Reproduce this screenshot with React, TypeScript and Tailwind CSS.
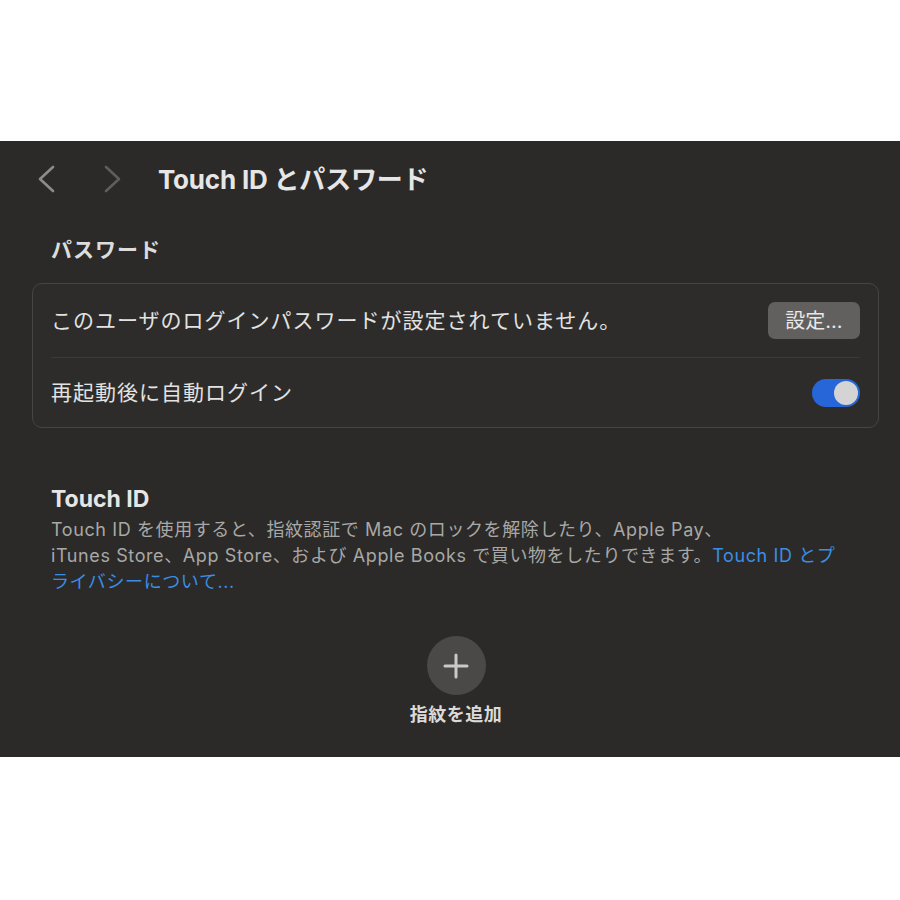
import React from "react";

const font = { fontFamily: '"Inter", "Noto Sans CJK JP", sans-serif' };

export default function App() {
  return (
    <div className="w-[900px] h-[900px] bg-white flex flex-col" style={font}>
      <div className="h-[141px]" />
      <div className="h-[616px] bg-[#2b2a28] flex flex-col">
        {/* toolbar */}
        <div className="flex items-center h-[76px] pl-[37px]">
          <svg width="18" height="28" viewBox="0 0 18 28">
            <path d="M16 2 L3 14 L16 26" stroke="#8c8c8a" strokeWidth="2.6" fill="none" strokeLinecap="round" strokeLinejoin="round" />
          </svg>
          <svg width="18" height="28" viewBox="0 0 18 28" className="ml-[49px]">
            <path d="M2 2 L15 14 L2 26" stroke="#5e5e5c" strokeWidth="2.6" fill="none" strokeLinecap="round" strokeLinejoin="round" />
          </svg>
          <div className="ml-[36px] text-[26px] font-bold text-[#e6e6e6] tracking-[-0.2px]">Touch ID とパスワード</div>
        </div>

        {/* password section */}
        <div className="pl-[51px] mt-[18px] text-[21px] font-bold text-[#dcdcdc] leading-[30px] tracking-[1px]">パスワード</div>
        <div className="mr-[21px] ml-[32px] mt-[18px] border border-[#464543] rounded-[10px] bg-[#2d2c2a] px-[18px]">
          <div className="flex items-center justify-between h-[73px]">
            <span className="text-[21px] text-[#e2e2e2] tracking-[1px]">このユーザのログインパスワードが設定されていません。</span>
            <div className="w-[92px] h-[37px] rounded-[7px] bg-[#61605e] flex items-center justify-center text-[20px] text-[#e8e8e8]">設定...</div>
          </div>
          <div className="h-px bg-[#3b3a38]" />
          <div className="flex items-center justify-between h-[69px]">
            <span className="text-[21px] text-[#e2e2e2] tracking-[1px]">再起動後に自動ログイン</span>
            <div className="w-[48px] h-[28px] rounded-full bg-[#2766d8] flex items-center justify-end pr-[2px]">
              <div className="w-[24px] h-[24px] rounded-full bg-[#d4d4d4]" />
            </div>
          </div>
        </div>

        {/* Touch ID */}
        <div className="pl-[51px] pr-[30px] mt-[56px]">
          <div className="text-[23px] font-bold text-[#e6e6e6] leading-[30px]">Touch ID</div>
          <p className="text-[18px] leading-[26px] text-[#a8a8a6] mt-[3px] tracking-[0.6px] whitespace-nowrap">
            Touch ID を使用すると、指紋認証で Mac のロックを解除したり、Apple Pay、
            <br />
            iTunes Store、App Store、および Apple Books で買い物をしたりできます。
            <span className="text-[#3a8ee6]">Touch ID とプ</span>
            <br />
            <span className="text-[#3a8ee6]">ライバシーについて...</span>
          </p>
        </div>

        <div className="flex flex-col items-center mt-[41px] ml-[12px]">
          <div className="w-[59px] h-[59px] rounded-full bg-[#4a4947] flex items-center justify-center">
            <svg width="28" height="28" viewBox="0 0 28 28">
              <path d="M14 3 V25 M3 14 H25" stroke="#c9c9c7" strokeWidth="3" strokeLinecap="round" />
            </svg>
          </div>
          <div className="mt-[6px] text-[18px] font-semibold text-[#dadada] tracking-[0.5px]">指紋を追加</div>
        </div>
      </div>
    </div>
  );
}
